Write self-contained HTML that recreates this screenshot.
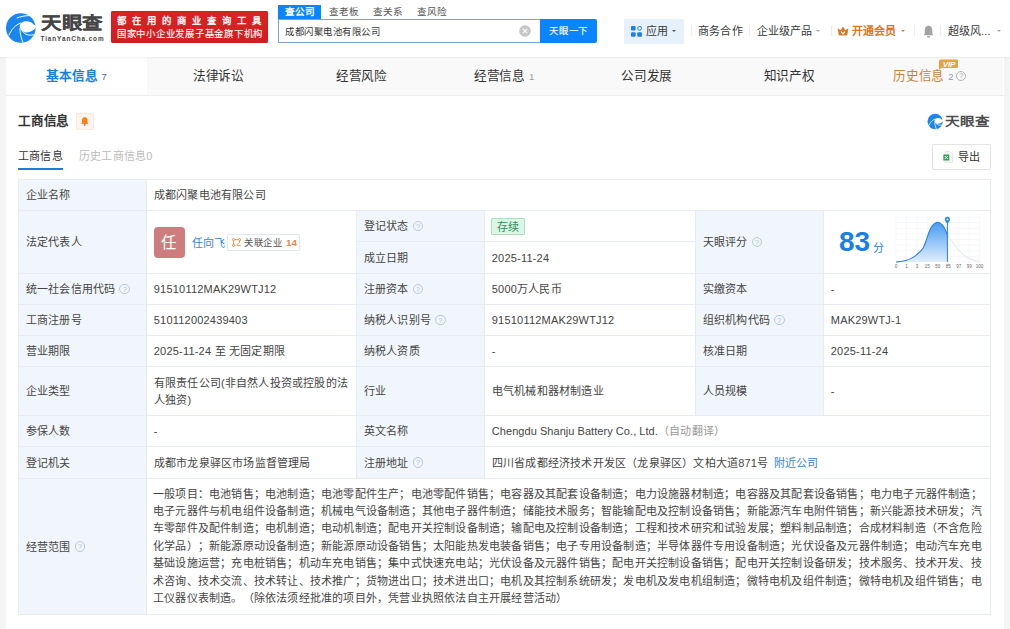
<!DOCTYPE html>
<html lang="zh-CN"><head><meta charset="utf-8">
<style>
*{margin:0;padding:0;box-sizing:border-box}
html,body{width:1010px;height:629px;overflow:hidden}
body{position:relative;text-spacing-trim:space-all;background:#f4f4f5;font-family:"Liberation Sans",sans-serif;color:#333}
.a{position:absolute;white-space:nowrap}
#hdr{position:absolute;left:0;top:0;width:1010px;height:57px;background:#fff;z-index:2;box-shadow:0 1px 1.5px rgba(0,0,0,0.05)}
.redbox{left:111px;top:11px;width:157px;height:32px;background:linear-gradient(#d92424,#d11d1d);border-radius:2px;box-shadow:inset 0 0 0 0.5px #c81a1a}
.tab{font-size:9.6px;letter-spacing:0.1px;color:#555;top:5px;height:14px;line-height:14px}
.nav{font-size:11px;letter-spacing:0.2px;color:#383838;top:24px;line-height:14px}
.sep{top:25.3px;width:1px;height:10.5px;background:#ececec}
.caret{width:0;height:0;border-left:2.6px solid transparent;border-right:2.6px solid transparent;border-top:2.8px solid #888}
#card{position:absolute;left:6px;top:57px;width:997.5px;height:600px;background:#fff}
.mt{top:57px;height:38px;line-height:38px;font-size:12.6px;letter-spacing:-0.2px;color:#333;text-align:center;width:142.57px;background:#f9f9f9}
.t{font-size:11px;letter-spacing:0.2px;color:#444;line-height:17.5px}
.lb{position:absolute;background:#f1f6fc}
.hl{position:absolute;height:1px;background:#e8ecf1}
.vl{position:absolute;width:1px;background:#e8ecf1}
.c{position:absolute;display:flex;align-items:center;padding-left:7.8px;padding-top:2px;white-space:nowrap}
.q{display:inline-block;width:10.5px;height:10.5px;border:0.9px solid #b8c9da;border-radius:50%;font-size:8px;line-height:9px;text-align:center;color:#b3c4d6;margin-left:4px;position:relative;top:-0.8px;letter-spacing:0}
</style></head><body>
<div id="hdr">
  <svg class="a" style="left:5px;top:12px" width="32" height="32" viewBox="0 0 32 32">
    <circle cx="15.8" cy="16" r="14.8" fill="#1a86f0"/>
    <path d="M14.8 14.8 C14.6 11 18 9.2 21.5 9.2 C25 9.2 27.6 10.8 28.6 12.6 L32 14.3 C29.5 18.3 25 20.6 21.2 20.4 C17.2 20.2 14.9 17.8 14.8 14.8 Z" fill="#fff"/>
    <path d="M3.8 23.5 C6.5 17.5 10 13 16 11" stroke="#fff" stroke-width="1" fill="none"/>
    <path d="M14.9 16 C15 21 16 26 18 30.5" stroke="#fff" stroke-width="1" fill="none"/>
    <path d="M11.8 6 C15.5 4.6 20 3.6 24.5 3.6" stroke="#fff" stroke-width="1" fill="none"/>
    <path d="M17.5 19.5 C20 22.5 24 24 28.8 22.6" stroke="#fff" stroke-width="1" fill="none"/>
  </svg>
  <div class="a" style="left:40.5px;top:12px;font-size:16.8px;font-weight:bold;color:#454545;-webkit-text-stroke:0.2px #454545;line-height:24px;transform:scaleX(1.22);transform-origin:left">天眼查</div>
  <div class="a" style="left:40.5px;top:35px;font-size:6.4px;font-weight:bold;color:#444;letter-spacing:0.9px;line-height:8px">TianYanCha.com</div>
  <div class="a redbox"></div>
  <div class="a" style="left:117px;top:14.5px;font-size:9.4px;font-weight:normal;-webkit-text-stroke:0.35px #fff;color:#fff;letter-spacing:5.95px;line-height:12px">都在用的商业查询工具</div>
  <div class="a" style="left:117px;top:27.5px;font-size:9.4px;letter-spacing:0.74px;-webkit-text-stroke:0.12px #fff;color:#fff;line-height:12px">国家中小企业发展子基金旗下机构</div>

  <div class="a" style="left:278px;top:5px;width:43px;height:15px;background:#0a84ff"></div>
  <div class="a tab" style="left:285px;color:#fff;font-weight:bold">查公司</div>
  <div class="a tab" style="left:329px">查老板</div>
  <div class="a tab" style="left:373px">查关系</div>
  <div class="a tab" style="left:417px">查风险</div>
  <div class="a" style="left:277.5px;top:19px;width:263px;height:24px;border:1px solid #78a5d0;border-right:none;background:#fff"></div>
  <div class="a" style="left:285px;top:24.8px;font-size:9.4px;letter-spacing:0.55px;color:#333;line-height:13px">成都闪聚电池有限公司</div>
  <svg class="a" style="left:518.5px;top:25px" width="12" height="12" viewBox="0 0 12 12"><circle cx="6" cy="6" r="5.8" fill="#c6c6c6"/><path d="M3.8 3.8 L8.2 8.2 M8.2 3.8 L3.8 8.2" stroke="#fff" stroke-width="1.2"/></svg>
  <div class="a" style="left:540px;top:19px;width:57px;height:24px;background:#0a84ff;border-radius:0 2px 2px 0"></div>
  <div class="a" style="left:549px;top:23.8px;font-size:9.4px;letter-spacing:0.75px;-webkit-text-stroke:0.15px #fff;color:#fff;line-height:13px">天眼一下</div>

  <div class="a" style="left:624px;top:18.5px;width:60px;height:25.5px;background:#e6f1fc"></div>
  <svg class="a" style="left:631px;top:25.5px" width="11" height="11" viewBox="0 0 11 11">
    <rect x="0" y="0" width="4.6" height="4.6" rx="1" fill="#1a7fe6"/>
    <circle cx="8.6" cy="2.3" r="1.9" fill="none" stroke="#1a7fe6" stroke-width="1"/>
    <rect x="0" y="6.2" width="4.6" height="4.6" rx="1" fill="#1a7fe6"/>
    <rect x="6.3" y="6.2" width="4.6" height="4.6" rx="1" fill="#1a7fe6"/>
  </svg>
  <div class="a nav" style="left:646px">应用</div>
  <div class="a caret" style="left:672px;top:29.5px;border-top-color:#555"></div>
  <div class="a sep" style="left:691px"></div>
  <div class="a nav" style="left:698px">商务合作</div>
  <div class="a sep" style="left:749px"></div>
  <div class="a nav" style="left:756.5px">企业级产品</div>
  <div class="a caret" style="left:816px;top:29.5px;border-top-color:#aaa"></div>
  <div class="a sep" style="left:831px"></div>
  <svg class="a" style="left:837px;top:26px" width="12" height="10" viewBox="0 0 12 10">
    <path d="M0.6 2.2 L3.6 4.2 L6 0.6 L8.4 4.2 L11.4 2.2 L10.4 8.6 Q10.2 9.6 9.2 9.6 L2.8 9.6 Q1.8 9.6 1.6 8.6 Z" fill="#d97a24"/>
    <path d="M4.2 5.6 L6 7.8 L7.8 5.6" stroke="#fff" stroke-width="1.1" fill="none"/>
  </svg>
  <div class="a nav" style="left:851.5px;color:#d7791f;font-weight:bold">开通会员</div>
  <div class="a caret" style="left:900.5px;top:29.5px;border-top-color:#c98a4a"></div>
  <div class="a sep" style="left:914px"></div>
  <svg class="a" style="left:922.5px;top:24.5px" width="11" height="13" viewBox="0 0 10 12">
    <path d="M5 0.8 C2.5 0.8 1.5 3 1.5 5 L1.5 8 L0.3 9.5 L9.7 9.5 L8.5 8 L8.5 5 C8.5 3 7.5 0.8 5 0.8 Z" fill="#a3a3a3"/>
    <rect x="3.5" y="10.2" width="3" height="1.3" rx="0.6" fill="#a3a3a3"/>
  </svg>
  <div class="a sep" style="left:939.5px"></div>
  <div class="a nav" style="left:947.5px">超级风...</div>
  <div class="a caret" style="left:996.5px;top:29.5px;border-top-color:#aaa"></div>
</div>

<div id="card"></div>
<div class="a mt" style="left:6px;width:141px;z-index:1;background:#fff;color:#1a7fd4;font-weight:bold"><span style="position:relative;left:0px">基本信息<span style="font-size:9.5px;font-weight:normal;margin-left:4px;color:#3a6a9a">7</span></span></div>
<div class="a mt" style="left:146.8px;width:143.34px">法律诉讼</div>
<div class="a mt" style="left:290.14px">经营风险</div>
<div class="a mt" style="left:432.71px">经营信息<span style="font-size:9.5px;margin-left:4px;color:#999">1</span></div>
<div class="a mt" style="left:575.28px">公司发展</div>
<div class="a mt" style="left:717.85px">知识产权</div>
<div class="a mt" style="left:860.42px;color:#c8823e"><span style="position:relative;left:-2px">历史信息<span style="font-size:9.5px;margin-left:4px;color:#8a9aab">2</span><span style="display:inline-block;width:10px;height:10px;border:0.9px solid #b4b4b4;border-radius:50%;font-size:7.5px;line-height:8.5px;color:#aaa;margin-left:3px;vertical-align:middle;position:relative;top:-1px;letter-spacing:0">?</span></span></div>
<svg class="a" style="left:937.5px;top:58.5px" width="21" height="11.5" viewBox="0 0 21 11.5"><path d="M2.5 0.5 H19 Q20 0.5 20 1.5 V8 Q20 9 19 9 H3.5 L1 11 L1 2 Q1 0.5 2.5 0.5 Z" fill="#e5a247"/><text x="11" y="7.8" font-size="7.8" font-weight="bold" font-style="italic" fill="#fff" text-anchor="middle" font-family="Liberation Sans">VIP</text></svg>
<div class="a" style="left:6px;top:95px;width:998px;height:1px;background:#eee"></div>

<!-- section heading -->
<div class="a" style="left:18px;top:112px;font-size:12.6px;letter-spacing:-0.2px;font-weight:bold;color:#333;line-height:18px">工商信息</div>
<div class="a" style="left:76px;top:113px;width:17.5px;height:17px;background:#fdf4ec;border:0.5px solid #f8ebe0;border-radius:1px"></div>
<svg class="a" style="left:81px;top:116.5px" width="7.5" height="9" viewBox="0 0 7.5 9">
  <path d="M3.75 0.3 C1.6 0.3 0.9 2 0.9 3.8 L0.9 5.8 L0.2 7 L7.3 7 L6.6 5.8 L6.6 3.8 C6.6 2 5.9 0.3 3.75 0.3 Z" fill="#ff820f"/>
  <circle cx="3.75" cy="7.9" r="0.9" fill="#e5700a"/>
</svg>
<div class="a" style="left:18px;top:148px;font-size:11px;letter-spacing:0.2px;color:#333;line-height:17px">工商信息</div>
<div class="a" style="left:18px;top:168px;width:45px;height:2px;background:#1a7fd4"></div>
<div class="a" style="left:79px;top:148px;font-size:11px;letter-spacing:0.2px;color:#bbb;line-height:17px">历史工商信息0</div>

<!-- small logo -->
<svg class="a" style="left:926.5px;top:113px" width="16.5" height="17" viewBox="0 0 32 32">
  <circle cx="15.8" cy="16" r="14.8" fill="#1a86f0"/>
  <path d="M14.8 14.8 C14.6 11 18 9.2 21.5 9.2 C25 9.2 27.6 10.8 28.6 12.6 L32 14.3 C29.5 18.3 25 20.6 21.2 20.4 C17.2 20.2 14.9 17.8 14.8 14.8 Z" fill="#fff"/>
  <path d="M3.8 23.5 C6.5 17.5 10 13 16 11" stroke="#fff" stroke-width="1.5" fill="none"/>
  <path d="M14.9 16 C15 21 16 26 18 30.5" stroke="#fff" stroke-width="1.5" fill="none"/>
  <path d="M17.5 19.5 C20 22.5 24 24 28.8 22.6" stroke="#fff" stroke-width="1.5" fill="none"/>
</svg>
<div class="a" style="left:944.5px;top:113px;font-size:12.5px;font-weight:bold;color:#4d4d4d;line-height:18px;transform:scaleX(1.17);transform-origin:left">天眼查</div>
<div class="a" style="left:932px;top:144px;width:58.5px;height:25.5px;border:1px solid #e3e3e3;border-radius:2px;background:#fff"></div>
<svg class="a" style="left:942.5px;top:150.5px" width="10" height="12" viewBox="0 0 10 12">
  <path d="M2 0.5 L7 0.5 L9.5 3 L9.5 11.5 L2 11.5 Z" fill="#f4f4f4" stroke="#d8d8d8" stroke-width="0.6"/>
  <rect x="0.3" y="3.5" width="6" height="6" rx="0.6" fill="#2fa35a"/>
  <path d="M1.8 5 L4.8 8 M4.8 5 L1.8 8" stroke="#fff" stroke-width="0.9"/>
</svg>
<div class="a" style="left:957.5px;top:149px;font-size:11px;letter-spacing:0.2px;color:#333;line-height:17px">导出</div>

<!-- TABLE -->
<div id="tbl">
  <div class="lb" style="left:18px;top:179px;width:128px;height:435px"></div>
  <div class="lb" style="left:356px;top:210px;width:128px;height:205px"></div>
  <div class="lb" style="left:695px;top:210px;width:128px;height:205px"></div>
  <div class="lb" style="left:356px;top:415px;width:128px;height:63px"></div>
  <!-- horizontal lines -->
  <div class="hl" style="left:18px;top:179px;width:973px"></div>
  <div class="hl" style="left:18px;top:210px;width:973px"></div>
  <div class="hl" style="left:356px;top:241px;width:339px"></div>
  <div class="hl" style="left:18px;top:273px;width:973px"></div>
  <div class="hl" style="left:18px;top:304px;width:973px"></div>
  <div class="hl" style="left:18px;top:335px;width:973px"></div>
  <div class="hl" style="left:18px;top:366px;width:973px"></div>
  <div class="hl" style="left:18px;top:415px;width:973px"></div>
  <div class="hl" style="left:18px;top:446px;width:973px"></div>
  <div class="hl" style="left:18px;top:478px;width:973px"></div>
  <div class="hl" style="left:18px;top:614px;width:973px"></div>
  <!-- vertical lines -->
  <div class="vl" style="left:18px;top:179px;height:436px"></div>
  <div class="vl" style="left:146px;top:179px;height:436px"></div>
  <div class="vl" style="left:356px;top:210px;height:268px"></div>
  <div class="vl" style="left:484px;top:210px;height:268px"></div>
  <div class="vl" style="left:695px;top:210px;height:205px"></div>
  <div class="vl" style="left:823px;top:210px;height:205px"></div>
  <div class="vl" style="left:990px;top:179px;height:436px"></div>

  <!-- row 1 -->
  <div class="c t" style="left:18px;top:180px;width:128px;height:30px">企业名称</div>
  <div class="c t" style="left:146px;top:180px;width:844px;height:30px">成都闪聚电池有限公司</div>
  <!-- row 2 -->
  <div class="c t" style="left:18px;top:211px;width:128px;height:62px">法定代表人</div>
  <div class="a" style="left:153.7px;top:226.5px;width:31.6px;height:31.4px;background:#cd7d7e;border-radius:4px;color:#fff;font-size:15.5px;line-height:32.5px;text-align:center">任</div>
  <div class="a t" style="left:192px;top:234.5px;color:#3384d6">任向飞</div>
  <div class="a" style="left:227px;top:234px;width:72.5px;height:17px;border:1px solid #e0e7ef;border-radius:1px;background:#fff"></div>
  <svg class="a" style="left:231.5px;top:237.8px" width="9.5" height="9" viewBox="0 0 9.5 9">
    <circle cx="1.6" cy="1.6" r="1.1" fill="none" stroke="#ef8a3a" stroke-width="0.9"/>
    <circle cx="7.6" cy="1.6" r="1.1" fill="none" stroke="#ef8a3a" stroke-width="0.9"/>
    <circle cx="1.6" cy="7.4" r="1.1" fill="none" stroke="#ef8a3a" stroke-width="0.9"/>
    <path d="M2.8 1.6 H6.4 M1.6 2.8 V6.2 M7.6 2.8 V4.2 Q7.6 5 6.6 5.4 L5.4 6.2 Q4.9 6.8 5.2 7.6 H8.6" stroke="#ef8a3a" stroke-width="0.9" fill="none"/>
  </svg>
  <div class="a" style="left:244px;top:235.8px;font-size:9.4px;letter-spacing:0.6px;color:#555;line-height:14px">关联企业</div>
  <div class="a" style="left:286px;top:236px;font-size:9.8px;font-weight:bold;color:#e9874a;line-height:14px">14</div>

  <div class="c t" style="left:356px;top:211px;width:128px;height:30px">登记状态<span class="q">?</span></div>
  <div class="a" style="left:491px;top:217.5px;width:34px;height:17.5px;background:#dcf6e6;border:1px solid #b0dcc0;border-radius:1px"></div>
  <div class="a" style="left:497px;top:218.5px;font-size:11px;letter-spacing:0.2px;color:#2f8f5b;line-height:17px">存续</div>
  <div class="c t" style="left:356px;top:242px;width:128px;height:31px">成立日期</div>
  <div class="c t" style="left:484px;top:242px;width:211px;height:31px">2025-11-24</div>

  <div class="c t" style="left:695px;top:211px;width:128px;height:62px">天眼评分<span class="q">?</span></div>
  <div class="a" style="left:839px;top:227px;font-size:28px;font-weight:bold;color:#1a7fe8;line-height:30px">83</div>
  <div class="a" style="left:872.5px;top:240.5px;font-size:11px;color:#1a7fe8;line-height:15px">分</div>
  <svg class="a" style="left:893px;top:214px" width="94" height="57" viewBox="893 214 94 57">
    <defs><linearGradient id="g1" x1="0" y1="0" x2="0" y2="1">
      <stop offset="0" stop-color="#469bf2"/><stop offset="1" stop-color="#e2eefc"/></linearGradient></defs>
    <g stroke="#eef1f5" stroke-width="0.5">
      <path d="M896 217 V262 M906.45 217 V262 M916.9 217 V262 M927.35 217 V262 M937.8 217 V262 M948.25 217 V262 M958.7 217 V262 M969.15 217 V262 M979.6 217 V262"/>
      <path d="M896 217 H979.6 M896 222.6 H979.6 M896 228.3 H979.6 M896 233.9 H979.6 M896 239.5 H979.6 M896 245.1 H979.6 M896 250.8 H979.6 M896 256.4 H979.6 M896 262 H979.6"/>
    </g>
    <path d="M896.0 262.0 C897.6 261.8 902.9 261.4 905.9 260.5 C908.9 259.6 911.6 258.3 913.9 256.9 C916.1 255.5 917.8 253.8 919.4 252.2 C921.0 250.6 922.2 249.5 923.4 247.4 C924.6 245.3 925.7 241.9 926.6 239.4 C927.5 236.9 928.1 234.6 929.0 232.3 C929.9 230.1 930.9 227.6 932.2 225.9 C933.5 224.2 935.3 222.6 936.9 222.3 C938.5 222.0 940.4 223.2 941.7 224.3 C943.0 225.4 944.0 227.3 944.9 229.1 C945.8 230.9 947.0 233.9 947.4 234.9 L947.4 262 L896 262 Z" fill="url(#g1)"/>
    <path d="M896.0 262.0 C897.6 261.8 902.9 261.4 905.9 260.5 C908.9 259.6 911.6 258.3 913.9 256.9 C916.1 255.5 917.8 253.8 919.4 252.2 C921.0 250.6 922.2 249.5 923.4 247.4 C924.6 245.3 925.7 241.9 926.6 239.4 C927.5 236.9 928.1 234.6 929.0 232.3 C929.9 230.1 930.9 227.6 932.2 225.9 C933.5 224.2 935.3 222.6 936.9 222.3 C938.5 222.0 940.4 223.2 941.7 224.3 C943.0 225.4 944.0 227.3 944.9 229.1 C945.8 230.9 947.0 233.9 947.4 234.9" fill="none" stroke="#2b7fd6" stroke-width="1.1"/>
    <path d="M947.4 234.9 C948.8 237.3 951.1 240.8 953.4 243.7 C955.7 246.6 958.7 250.1 961.3 252.6 C963.9 255.1 966.2 257.0 969.2 258.5 C972.2 260.0 977.9 261.2 979.6 261.8" fill="none" stroke="#d9dde2" stroke-width="0.8"/>
    <path d="M947.4 220 V262" stroke="#2b7fd6" stroke-width="1"/>
    <path d="M947.4 223.5 C946.2 222.2 944.8 221 944.8 219.4 A2.6 2.6 0 1 1 950 219.4 C950 221 948.6 222.2 947.4 223.5 Z" fill="#2b8ae0"/>
    <circle cx="947.4" cy="219.4" r="0.9" fill="#fff"/>
    <g font-size="4.5" fill="#666" text-anchor="middle" font-family="Liberation Sans">
      <text x="896" y="268">0</text><text x="906.45" y="268">1</text><text x="916.9" y="268">3</text><text x="927.35" y="268">15</text><text x="937.8" y="268">50</text><text x="948.25" y="268">85</text><text x="958.7" y="268">97</text><text x="969.15" y="268">99</text><text x="979.6" y="268">100</text>
    </g>
  </svg>
  <!-- row 3 -->
  <div class="c t" style="left:18px;top:274px;width:128px;height:30px">统一社会信用代码<span class="q">?</span></div>
  <div class="c t" style="left:146px;top:274px;width:210px;height:30px">91510112MAK29WTJ12</div>
  <div class="c t" style="left:356px;top:274px;width:128px;height:30px">注册资本<span class="q">?</span></div>
  <div class="c t" style="left:484px;top:274px;width:211px;height:30px">5000万人民币</div>
  <div class="c t" style="left:695px;top:274px;width:128px;height:30px">实缴资本</div>
  <div class="c t" style="left:823px;top:274px;width:167px;height:30px">-</div>
  <!-- row 4 -->
  <div class="c t" style="left:18px;top:305px;width:128px;height:30px">工商注册号</div>
  <div class="c t" style="left:146px;top:305px;width:210px;height:30px">510112002439403</div>
  <div class="c t" style="left:356px;top:305px;width:128px;height:30px">纳税人识别号<span class="q">?</span></div>
  <div class="c t" style="left:484px;top:305px;width:211px;height:30px">91510112MAK29WTJ12</div>
  <div class="c t" style="left:695px;top:305px;width:128px;height:30px">组织机构代码<span class="q">?</span></div>
  <div class="c t" style="left:823px;top:305px;width:167px;height:30px">MAK29WTJ-1</div>
  <!-- row 5 -->
  <div class="c t" style="left:18px;top:336px;width:128px;height:30px">营业期限</div>
  <div class="c t" style="left:146px;top:336px;width:210px;height:30px">2025-11-24 至 无固定期限</div>
  <div class="c t" style="left:356px;top:336px;width:128px;height:30px">纳税人资质</div>
  <div class="c t" style="left:484px;top:336px;width:211px;height:30px">-</div>
  <div class="c t" style="left:695px;top:336px;width:128px;height:30px">核准日期</div>
  <div class="c t" style="left:823px;top:336px;width:167px;height:30px">2025-11-24</div>
  <!-- row 6 -->
  <div class="c t" style="left:18px;top:367px;width:128px;height:48px">企业类型</div>
  <div class="c t" style="left:146px;top:367px;width:210px;height:48px"><div>有限责任公司(非自然人投资或控股的法<br>人独资)</div></div>
  <div class="c t" style="left:356px;top:367px;width:128px;height:48px">行业</div>
  <div class="c t" style="left:484px;top:367px;width:211px;height:48px">电气机械和器材制造业</div>
  <div class="c t" style="left:695px;top:367px;width:128px;height:48px">人员规模</div>
  <div class="c t" style="left:823px;top:367px;width:167px;height:48px">-</div>
  <!-- row 7 -->
  <div class="c t" style="left:18px;top:416px;width:128px;height:30px">参保人数</div>
  <div class="c t" style="left:146px;top:416px;width:210px;height:30px">-</div>
  <div class="c t" style="left:356px;top:416px;width:128px;height:30px">英文名称</div>
  <div class="c t" style="left:484px;top:416px;width:506px;height:30px"><span style="letter-spacing:0.05px">Chengdu Shanju Battery Co., Ltd.</span><span style="color:#999">（自动翻译）</span></div>
  <!-- row 8 -->
  <div class="c t" style="left:18px;top:447px;width:128px;height:31px">登记机关</div>
  <div class="c t" style="left:146px;top:447px;width:210px;height:31px">成都市龙泉驿区市场监督管理局</div>
  <div class="c t" style="left:356px;top:447px;width:128px;height:31px">注册地址<span class="q">?</span></div>
  <div class="c t" style="left:484px;top:447px;width:506px;height:31px">四川省成都经济技术开发区（龙泉驿区）文柏大道871号<span style="color:#3283d6;margin-left:5.2px">附近公司</span></div>
  <!-- row 9 -->
  <div class="c t" style="left:18px;top:479px;width:128px;height:135px">经营范围<span class="q">?</span></div>
  <div class="a t" style="left:153px;top:485.5px;line-height:17.4px">一般项目：电池销售；电池制造；电池零配件生产；电池零配件销售；电容器及其配套设备制造；电力设施器材制造；电容器及其配套设备销售；电力电子元器件制造；<br>电子元器件与机电组件设备制造；机械电气设备制造；其他电子器件制造；储能技术服务；智能输配电及控制设备销售；新能源汽车电附件销售；新兴能源技术研发；汽<br>车零部件及配件制造；电机制造；电动机制造；配电开关控制设备制造；输配电及控制设备制造；工程和技术研究和试验发展；塑料制品制造；合成材料制造（不含危险<br>化学品）；新能源原动设备制造；新能源原动设备销售；太阳能热发电装备销售；电子专用设备制造；半导体器件专用设备制造；光伏设备及元器件制造；电动汽车充电<br>基础设施运营；充电桩销售；机动车充电销售；集中式快速充电站；光伏设备及元器件销售；配电开关控制设备销售；配电开关控制设备研发；技术服务、技术开发、技<br>术咨询、技术交流、技术转让、技术推广；货物进出口；技术进出口；电机及其控制系统研发；发电机及发电机组制造；微特电机及组件制造；微特电机及组件销售；电<br>工仪器仪表制造。（除依法须经批准的项目外，凭营业执照依法自主开展经营活动）</div>
</div>

</body></html>
